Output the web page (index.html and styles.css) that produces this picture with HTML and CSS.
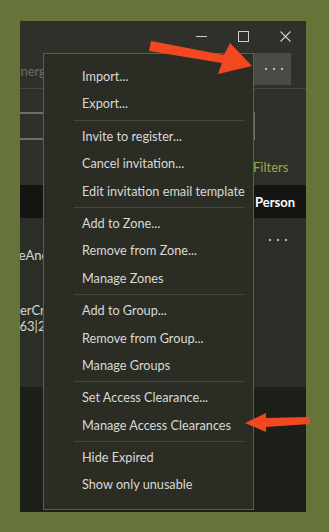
FILE: index.html
```html
<!DOCTYPE html>
<html lang="en">
<head>
    <meta charset="UTF-8">
    <meta name="viewport" content="width=device-width, initial-scale=1.0">
    <title>Cardholders - More menu</title>
    <link rel="stylesheet" href="styles.css">
</head>
<body>
    <div class="page">
        <div class="window">
            <!-- Caption buttons -->
            <div class="titlebar">
                <span class="caption-btn">
                    <svg width="11" height="11" viewBox="0 0 11 11"><path d="M0 5.5h11" stroke="#cfcfcf" stroke-width="1"/></svg>
                </span>
                <span class="caption-btn">
                    <svg width="11" height="11" viewBox="0 0 11 11"><rect x="0.5" y="0.5" width="10" height="10" fill="none" stroke="#cfcfcf" stroke-width="1"/></svg>
                </span>
                <span class="caption-btn">
                    <svg width="11" height="11" viewBox="0 0 11 11"><path d="M0.5 0.5l10 10M10.5 0.5l-10 10" stroke="#cfcfcf" stroke-width="1.1"/></svg>
                </span>
            </div>

            <div class="toolbar">
                <span class="toolbar-title">Synergis</span>
                <button class="more-btn"><span></span><span></span><span></span></button>
            </div>

            <div class="search-area">
                <div class="search-box"></div>
                <div class="filters">Filters</div>
            </div>

            <div class="grid-header">
                <span class="col-person">Person</span>
            </div>

            <div class="grid-rows">
                <div class="grid-row">
                    <div class="row-text">
                        <span>PhoneAndroid</span>
                    </div>
                    <div class="row-more"><span></span><span></span><span></span></div>
                </div>
                <div class="grid-row">
                    <div class="row-text">
                        <span class="line-one">UserCred</span>
                        <span class="line-two">263|2</span>
                    </div>
                </div>
            </div>

            <div class="grid-empty"></div>
        </div>

        <!-- More options flyout -->
        <div class="context-menu">
            <div class="menu-item">Import...</div>
            <div class="menu-item">Export...</div>
            <div class="menu-sep"></div>
            <div class="menu-item">Invite to register...</div>
            <div class="menu-item">Cancel invitation...</div>
            <div class="menu-item">Edit invitation email template</div>
            <div class="menu-sep"></div>
            <div class="menu-item">Add to Zone...</div>
            <div class="menu-item">Remove from Zone...</div>
            <div class="menu-item">Manage Zones</div>
            <div class="menu-sep"></div>
            <div class="menu-item">Add to Group...</div>
            <div class="menu-item">Remove from Group...</div>
            <div class="menu-item">Manage Groups</div>
            <div class="menu-sep"></div>
            <div class="menu-item">Set Access Clearance...</div>
            <div class="menu-item">Manage Access Clearances</div>
            <div class="menu-sep"></div>
            <div class="menu-item">Hide Expired</div>
            <div class="menu-item">Show only unusable</div>
        </div>

        <!-- Annotation arrows -->
        <svg class="arrow arrow-top" width="110" height="40" viewBox="0 0 110 40">
            <polygon points="3,1 76,15 82,3 104,26 70,34 74,23 1,11" fill="#f24822"/>
        </svg>
        <svg class="arrow arrow-bottom" width="70" height="24" viewBox="0 0 70 24">
            <polygon points="0,13 21,3 21,8 65,7 65,14 21,17 21,22" fill="#f24822"/>
        </svg>
    </div>
</body>
</html>
```

FILE: styles.css
```css
body {
    margin: 0;
    background-color: #667439;
    font-family: Lato, "Noto Sans", sans-serif;
    font-size: 13px;
    color: #d6d6d4;
}

.page {
    position: relative;
    width: 329px;
    height: 532px;
    padding: 21px 23px 20px 20px;
    box-sizing: border-box;
}

.window {
    height: 491px;
    background: #2e3029;
    display: flex;
    flex-direction: column;
    overflow: hidden;
}

.titlebar {
    height: 32px;
    display: flex;
    justify-content: flex-end;
    flex-shrink: 0;
}

.caption-btn {
    width: 42px;
    display: flex;
    align-items: center;
    justify-content: center;
    padding-bottom: 2px;
}

.toolbar {
    height: 35px;
    border-bottom: 1px solid #44463f;
    display: flex;
    justify-content: space-between;
    flex-shrink: 0;
}

.toolbar-title {
    margin-left: -13px;
    margin-top: 10px;
    color: #6c6e67;
}

.more-btn {
    width: 38px;
    height: 32px;
    margin: 0 15px 0 0;
    padding: 0 0 0 4px;
    border: none;
    background: #494b44;
    display: flex;
    align-items: center;
    justify-content: center;
    gap: 6px;
}

.more-btn span,
.row-more span {
    width: 2px;
    height: 2px;
    background: #e6e6e6;
    border-radius: 1px;
}

.search-area {
    height: 96px;
    flex-shrink: 0;
    display: flex;
    flex-direction: column;
}

.search-box {
    margin: 23px 0 0 -10px;
    width: 241px;
    height: 24px;
    border: 2px solid #6d6f68;
}

.filters {
    margin: 19px 0 0 233px;
    color: #98ab48;
}

.grid-header {
    height: 33px;
    background: #141513;
    display: flex;
    align-items: center;
    flex-shrink: 0;
}

.col-person {
    margin-left: 235px;
    color: #ffffff;
    font-weight: bold;
}

.grid-rows {
    height: 169px;
    background: #2b2e26;
    flex-shrink: 0;
}

.grid-row {
    display: flex;
    justify-content: space-between;
    height: 60px;
}

.grid-row + .grid-row {
    height: 109px;
}

.row-text {
    display: flex;
    flex-direction: column;
    margin-left: -31px;
    padding-top: 29px;
    line-height: 16px;
}

.grid-row + .grid-row .row-text {
    padding-top: 24px;
    margin-left: -15px;
}

.line-two {
    margin-left: 7px;
}

.row-more {
    display: flex;
    gap: 6px;
    margin: 21px 19px 0 0;
}

.grid-empty {
    flex: 1;
    background: #1c2018;
}

.context-menu {
    position: absolute;
    left: 43px;
    top: 53px;
    width: 209px;
    padding: 9px 0 10px 0;
    background: #2b2d25;
    border: 1px solid #5b5d56;
}

.menu-item {
    height: 27.4px;
    line-height: 27.4px;
    padding-left: 38px;
    white-space: nowrap;
    color: #d9d9d6;
    font-size: 12.7px;
}

.menu-sep {
    height: 1px;
    margin: 2px 8px 2px 30px;
    background: #44463e;
}

.arrow {
    position: absolute;
}

.arrow-top {
    left: 148px;
    top: 40px;
}

.arrow-bottom {
    left: 245px;
    top: 410px;
}
```
